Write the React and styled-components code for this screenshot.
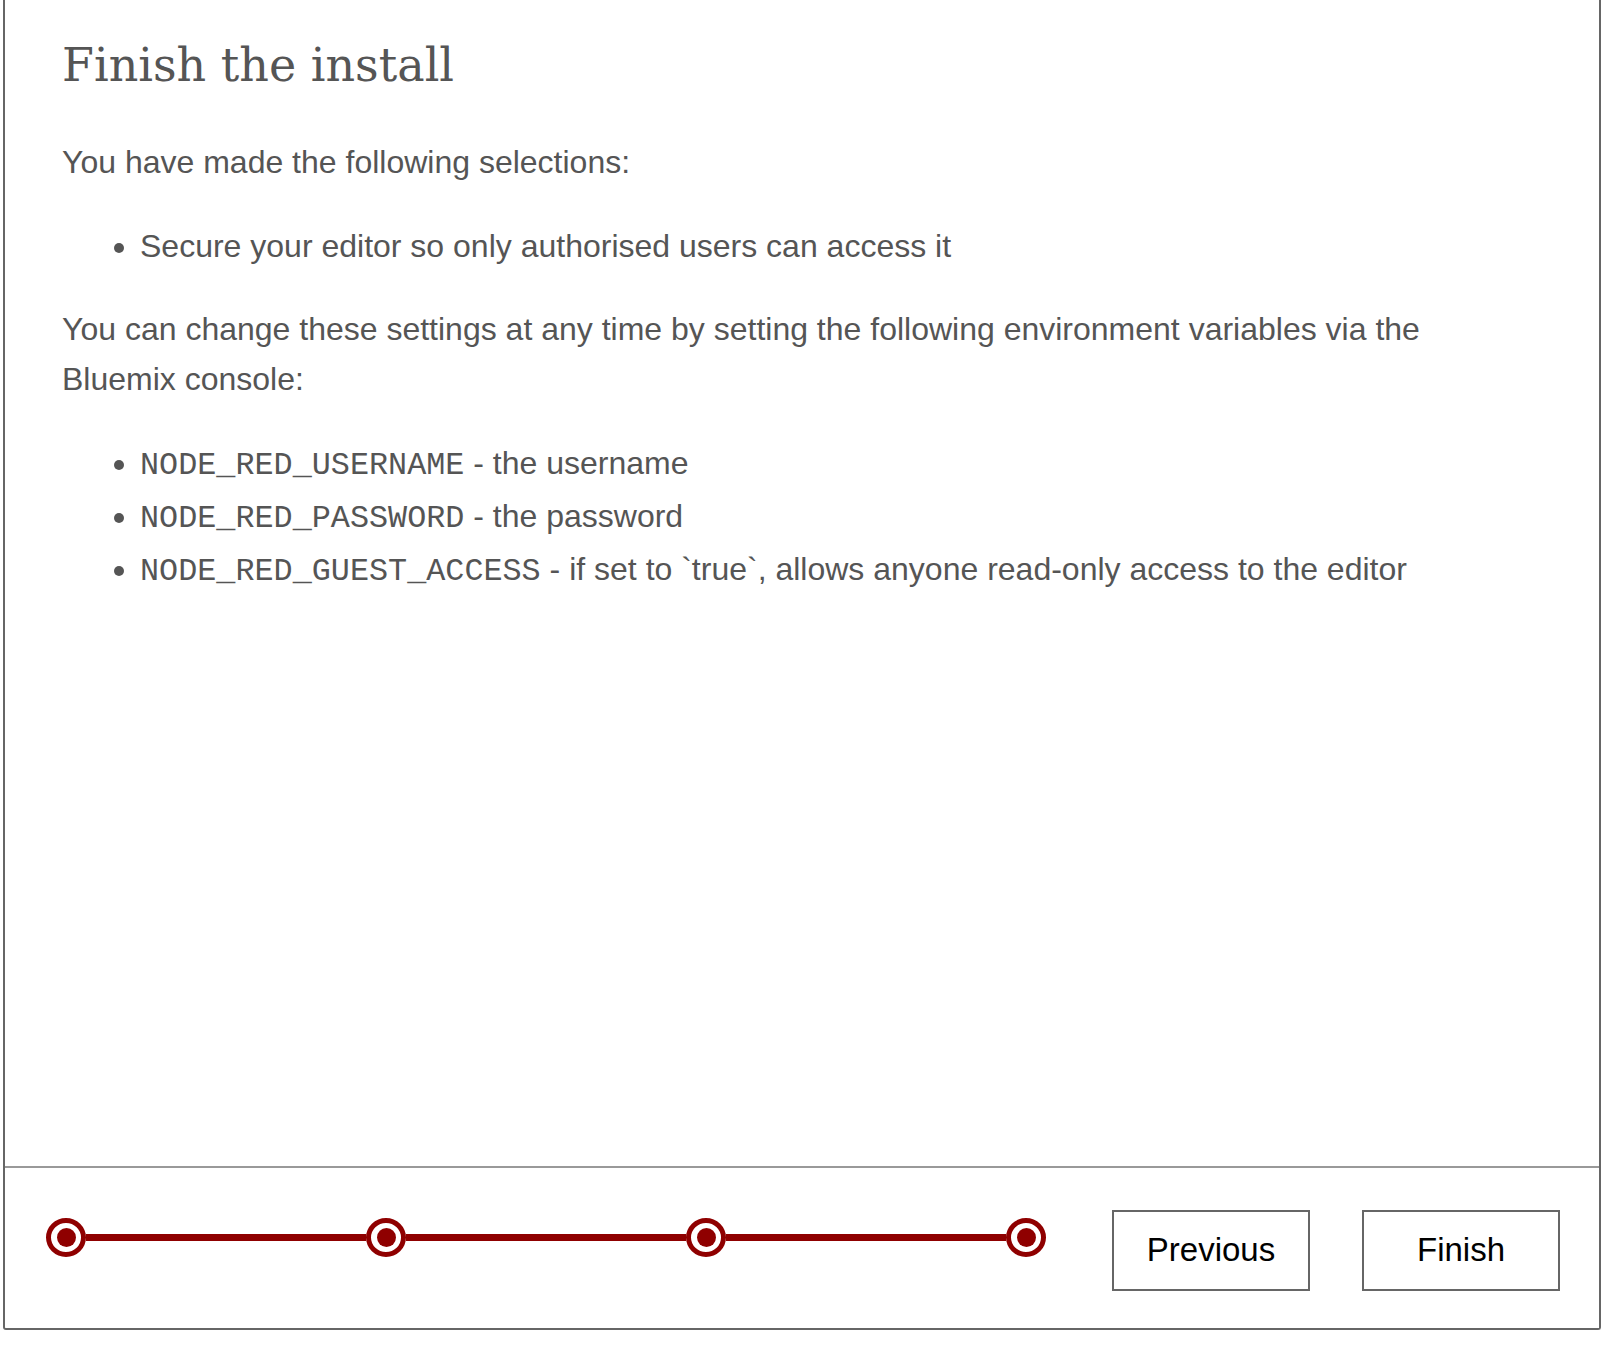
import styled, { createGlobalStyle } from "styled-components";

const GlobalStyle = createGlobalStyle`
    html, body {
        margin: 0;
        padding: 0;
        background: #ffffff;
    }
    body {
        font-family: "Liberation Sans", Arial, sans-serif;
    }
`;

const Page = styled.div`
    padding: 0 17px 25px 3px;
`;

const Panel = styled.div`
    border: 2px solid #666;
    border-top: none;
    border-radius: 0 0 3px 3px;
    display: flex;
    flex-direction: column;
`;

const Body = styled.div`
    height: 1168px;
    box-sizing: border-box;
    padding: 36px 70px 0 57px;
    border-bottom: 2px solid #999;
    color: #555;
`;

const Title = styled.h1`
    margin: 0 0 41px;
    font-family: "DejaVu Serif", "Liberation Serif", serif;
    font-weight: normal;
    font-size: 46px;
    line-height: 1.3;
    color: #555;
`;

const Para = styled.p`
    margin: 0;
    font-size: 32px;
    line-height: 50px;
`;

const List = styled.ul`
    margin: ${(p) => p.$top}px 0 ${(p) => p.$bottom}px;
    padding-left: 78px;
    font-size: 32px;
    line-height: ${(p) => p.$line}px;
`;

const Code = styled.code`
    font-family: "Liberation Mono", "Courier New", monospace;
    font-size: 31.8px;
    line-height: 1;
`;

const Footer = styled.div`
    height: 160px;
    display: flex;
    align-items: center;
    justify-content: space-between;
    padding: 0 39px 0 41px;
`;

const Stepper = styled.div`
    display: flex;
    align-items: center;
    margin-bottom: 22px;
`;

const Step = styled.div`
    width: 40px;
    height: 39px;
    box-sizing: border-box;
    border: 5px solid #8f0000;
    border-radius: 50%;
    background: #fff;
    display: flex;
    align-items: center;
    justify-content: center;

    &::after {
        content: "";
        width: 19px;
        height: 19px;
        border-radius: 50%;
        background: #8f0000;
    }
`;

const Track = styled.div`
    width: 280px;
    height: 7px;
    background: #8f0000;
`;

const Buttons = styled.div`
    display: flex;
    gap: 52px;
    margin-top: 4px;
`;

const Button = styled.button`
    width: 198px;
    height: 81px;
    border: 2px solid #666;
    background: #fff;
    color: #000;
    font-family: "Liberation Sans", Arial, sans-serif;
    font-size: 33px;
    cursor: pointer;
`;

const envVars = [
    { name: "NODE_RED_USERNAME", desc: "the username" },
    { name: "NODE_RED_PASSWORD", desc: "the password" },
    { name: "NODE_RED_GUEST_ACCESS", desc: "if set to `true`, allows anyone read-only access to the editor" },
];

export default function App() {
    const steps = [0, 1, 2, 3];
    return (
        <>
            <GlobalStyle />
            <Page>
                <Panel>
                    <Body>
                        <Title>Finish the install</Title>
                        <Para>You have made the following selections:</Para>
                        <List $top={34} $bottom={33} $line={50}>
                            <li>Secure your editor so only authorised users can access it</li>
                        </List>
                        <Para>
                            You can change these settings at any time by setting the following environment variables via the Bluemix console:
                        </Para>
                        <List $top={33} $bottom={0} $line={53}>
                            {envVars.map((v) => (
                                <li key={v.name}>
                                    <Code>{v.name}</Code> - {v.desc}
                                </li>
                            ))}
                        </List>
                    </Body>
                    <Footer>
                        <Stepper>
                            {steps.map((s) => (
                                <span key={s} style={{ display: "contents" }}>
                                    {s > 0 && <Track />}
                                    <Step />
                                </span>
                            ))}
                        </Stepper>
                        <Buttons>
                            <Button>Previous</Button>
                            <Button>Finish</Button>
                        </Buttons>
                    </Footer>
                </Panel>
            </Page>
        </>
    );
}
